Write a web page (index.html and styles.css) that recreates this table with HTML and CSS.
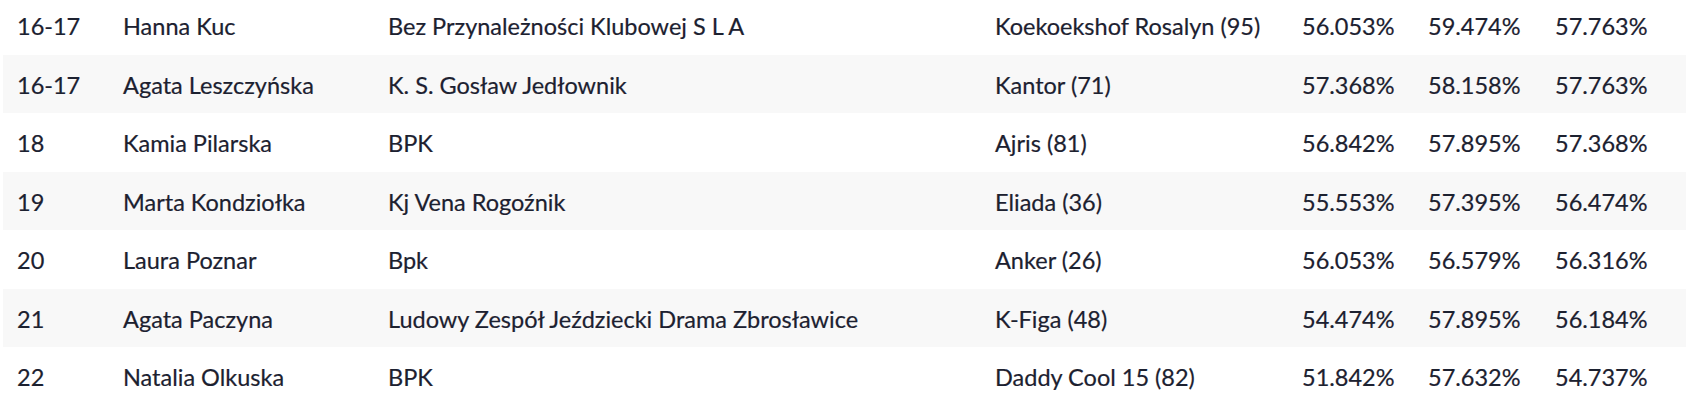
FILE: index.html
```html
<!DOCTYPE html>
<html lang="pl">
<head>
<meta charset="utf-8">
<title>Wyniki</title>
<link rel="stylesheet" href="styles.css">
</head>
<body>
<table class="results">
  <colgroup>
    <col class="c-place">
    <col class="c-rider">
    <col class="c-club">
    <col class="c-horse">
    <col class="c-score1">
    <col class="c-score2">
    <col class="c-total">
  </colgroup>
  <tbody>
    <tr><td>16-17</td><td>Hanna Kuc</td><td>Bez Przynależności Klubowej S L A</td><td>Koekoekshof Rosalyn (95)</td><td>56.053%</td><td>59.474%</td><td>57.763%</td></tr>
    <tr><td>16-17</td><td>Agata Leszczyńska</td><td>K. S. Gosław Jedłownik</td><td>Kantor (71)</td><td>57.368%</td><td>58.158%</td><td>57.763%</td></tr>
    <tr><td>18</td><td>Kamia Pilarska</td><td>BPK</td><td>Ajris (81)</td><td>56.842%</td><td>57.895%</td><td>57.368%</td></tr>
    <tr><td>19</td><td>Marta Kondziołka</td><td>Kj Vena Rogoźnik</td><td>Eliada (36)</td><td>55.553%</td><td>57.395%</td><td>56.474%</td></tr>
    <tr><td>20</td><td>Laura Poznar</td><td>Bpk</td><td>Anker (26)</td><td>56.053%</td><td>56.579%</td><td>56.316%</td></tr>
    <tr><td>21</td><td>Agata Paczyna</td><td>Ludowy Zespół Jeździecki Drama Zbrosławice</td><td>K-Figa (48)</td><td>54.474%</td><td>57.895%</td><td>56.184%</td></tr>
    <tr><td>22</td><td>Natalia Olkuska</td><td>BPK</td><td>Daddy Cool 15 (82)</td><td>51.842%</td><td>57.632%</td><td>54.737%</td></tr>
  </tbody>
</table>
</body>
</html>
```

FILE: styles.css
```css
html, body {
  margin: 0;
  padding: 0;
  background: #ffffff;
}

body {
  font-family: Lato, "Open Sans", "Liberation Sans", sans-serif;
  font-size: 23.5px;
  color: #1c2130;
  -webkit-text-stroke: 0.2px #1c2130;
  overflow: hidden;
}

.results {
  border-collapse: collapse;
  table-layout: fixed;
  width: 1683px;
  margin: -4px 0 0 3px;
}

.c-place { width: 106px; }
.c-rider { width: 265px; }
.c-club { width: 607px; }
.c-horse { width: 307px; }
.c-score1 { width: 126px; }
.c-score2 { width: 127px; }
.c-total { width: auto; }

.results td {
  height: 58.5px;
  padding: 3px 0 0 14px;
  line-height: 27px;
  vertical-align: middle;
  white-space: nowrap;
  box-sizing: border-box;
}

.results tr:nth-child(even) td {
  background: #f8f8f8;
}
```
